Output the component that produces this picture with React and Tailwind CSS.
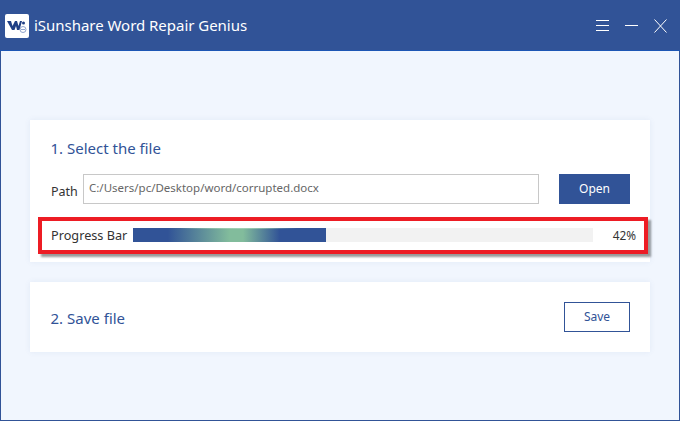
export default function App() {
  return (
    <div className="w-[680px] h-[421px] flex flex-col bg-[#f1f6fe] overflow-hidden font-['Noto_Sans',sans-serif]">
      <header className="h-[51px] shrink-0 bg-[#315397] border-b border-[#1d56b5] flex items-center pl-[5px] pr-[13px] pt-[1px]">
        <div className="w-6 h-6 bg-white rounded-[2px] flex items-center justify-center">
          <svg width="22" height="16" viewBox="0 0 22 16">
            <path d="M1 3h4l1.500 5L9 3h2l1.500 5L14 3h2l-2.500 9h-2.500L10 8l-1.500 4H6z" fill="#1f3f85" />
            <circle cx="17.500" cy="5" r="1.500" fill="#1f3f85" />
            <circle cx="17" cy="11.500" r="3" fill="white" stroke="#8fa3cc" strokeWidth="1" />
            <path d="M15 11.500h4" stroke="#8fa3cc" strokeWidth="1" />
          </svg>
        </div>
        <h1 className="ml-[5px] text-[15px] leading-none text-white font-normal tracking-[-0.03px]">iSunshare Word Repair Genius</h1>
        <div className="ml-auto flex items-center gap-[16px]">
          <svg width="13" height="11" viewBox="0 0 13 11" stroke="white" fill="none">
            <path d="M0 .5h13M0 5.500h13M0 10.500h13" />
          </svg>
          <svg width="13" height="11" viewBox="0 0 13 11" stroke="white" fill="none">
            <path d="M0 5.500h13" />
          </svg>
          <svg width="13" height="14" viewBox="0 0 13 14" stroke="white" fill="none" className="mt-[1px]">
            <path d="M.5.500l12 13M12.500.500l-12 13" />
          </svg>
        </div>
      </header>

      <main className="flex-1 border-x border-b border-[#315397] px-[29px] pt-[69px] flex flex-col gap-[20px]">
        <section className="relative h-[142px] bg-white shadow-[0_0_6px_rgba(49,83,151,0.08)] px-[20px] pt-[18px]">
          <h2 className="ml-[0.5px] text-[15px] leading-5 text-[#315397] font-normal">1. Select the file</h2>
          <div className="mt-[16px] flex items-center">
            <span className="ml-[1px] w-[32px] shrink-0 text-[12.500px] text-[#333] pt-[6px]">Path</span>
            <div className="w-[456px] shrink-0 h-[30px] border border-[#c8c8c8] flex items-center pl-[5px] text-[11.500px] text-[#666] pb-[2px]">C:/Users/pc/Desktop/word/corrupted.docx</div>
            <button className="ml-[20px] w-[71px] shrink-0 h-[30px] bg-[#315397] text-white text-[12px] pb-[1px]">Open</button>
          </div>
          <div className="mt-[24px] flex items-center h-[14px] relative z-10">
            <span className="ml-[1px] w-[82px] shrink-0 text-[12.700px] text-[#333] whitespace-nowrap pt-[2px]">Progress Bar</span>
            <div className="w-[460px] h-[14px] bg-[#f2f2f2]">
              <div className="h-full w-[193px] relative overflow-hidden bg-[linear-gradient(90deg,#315397_0%,#315397_18%,#82bc9c_50%,#82bc9c_57%,#315397_76%,#315397_100%)]">
                <div className="absolute left-[47px] w-[117px] top-0 h-[1px] bg-[linear-gradient(90deg,transparent,#a0d0b4,transparent)]" />
              </div>
            </div>
            <span className="ml-auto mr-[-6px] text-[11.800px] text-[#333] pt-[1px]">42%</span>
          </div>
          <div className="absolute left-[8px] top-[97px] w-[610px] h-[37px] border-[4px] border-[#ed1c24] shadow-[3px_3px_2px_rgba(0,0,0,0.4)]" />
        </section>

        <section className="h-[70px] bg-white shadow-[0_0_6px_rgba(49,83,151,0.08)] pl-[20.500px] pr-[20px] flex items-center justify-between">
          <h2 className="text-[15px] text-[#315397] font-normal pt-[2px]">2. Save file</h2>
          <button className="w-[66px] h-[30px] border border-[#315397] text-[#315397] text-[12px]">Save</button>
        </section>
      </main>
    </div>
  );
}
